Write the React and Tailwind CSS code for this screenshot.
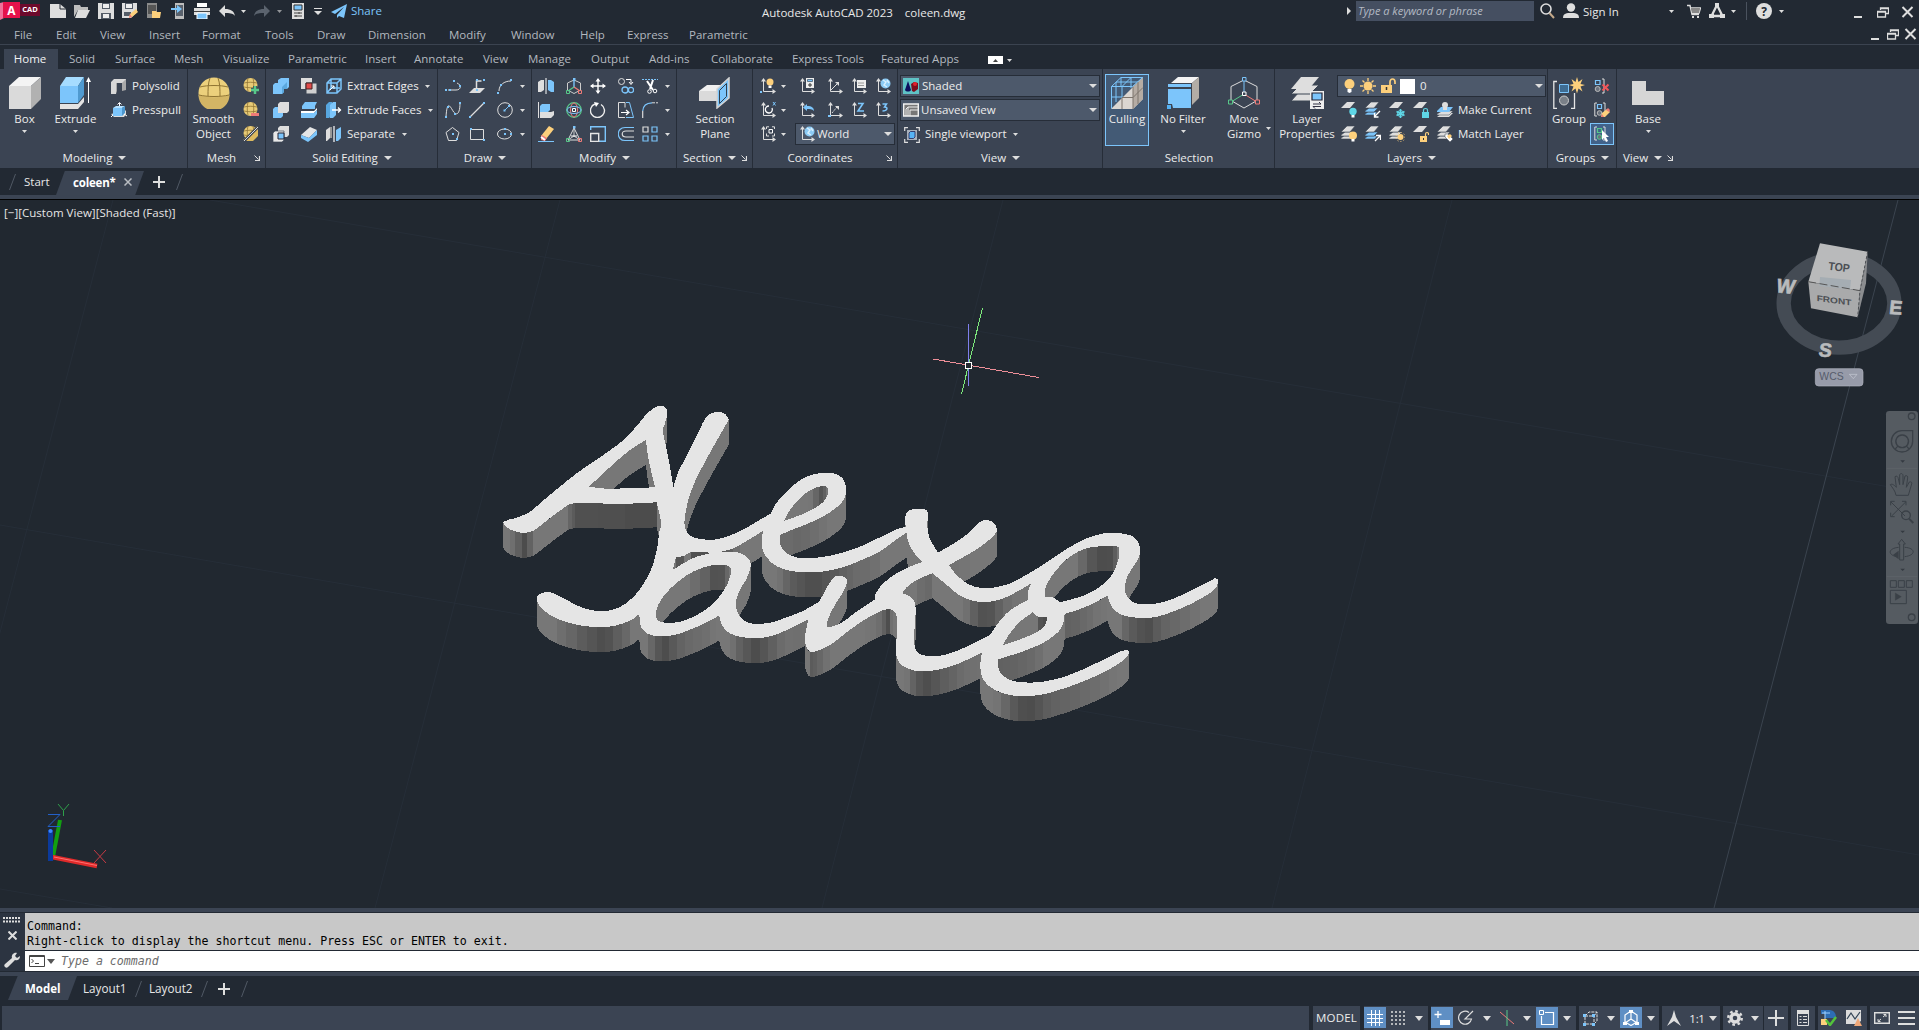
import React from "react";

const W = "#dedede", B = "#7cc5fb", Y = "#fdd07c", G = "#58c98a", R = "#ee7b78", T = "#5fd6e6";

/* ---------- primitives ---------- */
const Ic = ({ w = 16, h = 16, c = "", children }) => (
  <svg width={w} height={h} viewBox={`0 0 ${w} ${h}`} className={`shrink-0 ${c}`} fill="none">{children}</svg>
);
const Caret = ({ c = "" }) => <Ic w={5} h={3} c={c}><path d="M0 0h5L2.500 3z" fill={W} /></Ic>;
const BigCaret = ({ c = "" }) => <Ic w={8} h={4} c={c}><path d="M0 0h8L4 4z" fill={W} /></Ic>;
const L = ({ c = "", children }) => <span className={`whitespace-nowrap pb-[2px] ${c}`}>{children}</span>;

/* ---------- title bar icons ---------- */
const Logo = () => (
  <div className="flex h-[18px] w-[40px] shrink-0 items-center">
    <Ic w={20} h={18}>
      <path d="M0 1l4-1v16l-4 2z" fill="#f0719a" />
      <path d="M3 0h17v16H3z" fill="#e5124b" />
      <text x="11.500" y="12.500" textAnchor="middle" fontSize="12" fontWeight="700" fill="#fff" fontFamily="Open Sans, sans-serif">A</text>
    </Ic>
    <div className="mb-[2px] flex h-[12px] w-[20px] items-center justify-center bg-[#6d0a2c] text-[7.500px] font-bold leading-none text-white">CAD</div>
  </div>
);
const NewI = () => <Ic><path d="M0 1h10l6 5v9H0z" fill={W} /><path d="M10 1v5h6" stroke="#222933" /></Ic>;
const OpenI = () => <Ic><path d="M0 14V2h6l1 2h7v3H4z" fill="#bdbdbd" /><path d="M4 7h12l-4 8H1z" fill={W} /></Ic>;
const SaveI = () => <Ic><path d="M0 0h16v16H0z" fill={W} /><path d="M4 0h8v6H4zM3 10h10v6H3z" fill="#555d68" /><path d="M5 1h6v4H5zM5 11h6v4H5z" fill="#eee" /></Ic>;
const SaveAsI = () => <Ic><path d="M0 0h15v9l-6 6H0z" fill={W} /><path d="M3 0h8v6H3zM2 9h7v4H2z" fill="#555d68" /><path d="M4 1h6v4H4z" fill="#eee" /><path d="M7 15l1-4 6-5 2 3-6 5z" fill={Y} /><path d="M7 15l1-4 2 3z" fill={R} /></Ic>;
const WebOpenI = () => <Ic><path d="M1 0h10v15H1z" fill="#8b8b8b" /><path d="M2 2h8v9H2z" fill="#555" /><path d="M6 15V8h4l1 1h4l-1 6z" fill={Y} /></Ic>;
const WebSaveI = () => <Ic><path d="M5 0h9v16H5z" fill="#bdbdbd" /><path d="M6 2h7v11H6z" fill="#5a626d" /><path d="M1 5h6V2l5 4-5 4V7H1z" fill={B} /></Ic>;
const PrintI = () => <Ic><path d="M3 0h10v4H3z" fill="#fff" /><path d="M0 5h16v7H0z" fill={W} /><path d="M0 8h16v1H0z" fill="#444" /><path d="M3 10h10v6H3z" fill={B} stroke="#fff" /></Ic>;
const UndoI = ({ col = W, flip }) => <Ic><g transform={flip ? "translate(16 0) scale(-1 1)" : ""}><path d="M6 2v4c6 0 9 2 10 7-2-3-6-3-10-3v4L0 8z" fill={col} /></g></Ic>;
const SheetI = () => <Ic w={12} h={16}><path d="M0 0h12v16H0z" fill={W} /><path d="M2 2h8v5H2z" fill={B} stroke="#333" /><path d="M2 10h8M2 13h8" stroke="#444" /><path d="M7 9v2M4 12v2" stroke="#444" /></Ic>;
const PlaneI = () => <Ic><path d="M16 1L0 9l4 2L13 4 6 12v3l2-2 5 2z" fill={B} /></Ic>;
const RestoreI = () => <Ic w={12} h={11}><path d="M3.500 3V1h8v5.500H9M3 1.500h9M.500 4.500h8V10h-8zM0 5h9" stroke={W} strokeWidth="1.300" /></Ic>;
const CloseI = () => <Ic w={13} h={12}><path d="M1.500 1l10 10M11.500 1l-10 10" stroke={W} strokeWidth="2" /></Ic>;

/* ---------- large ribbon icons ---------- */
const BoxI = () => <Ic w={32} h={32}><path d="M0 9L10 0h22L22 9z" fill="#f4f4f4" /><path d="M0 9h22v23H0z" fill="#dadada" /><path d="M22 9L32 0v22L22 32z" fill="#b1b1b1" /></Ic>;
const ExtrudeI = () => <Ic w={32} h={32}><path d="M0 27h18l6-7v5l-6 7H0z" fill="#e3e3e3" /><path d="M0 9L6 0h18l-6 9z" fill="#a6dcff" /><path d="M0 9h18v17H0z" fill={B} /><path d="M18 9l6-9v18l-6 8z" fill="#4f9ad0" /><path d="M28.500 4v22" stroke="#fff" /><path d="M26 5l2.500-5L31 5z" fill="#fff" /></Ic>;
const SmoothI = () => <Ic w={32} h={32}><circle cx="16" cy="16" r="15.500" fill="#ecd07c" /><path d="M.5 18c8 3 23 3 31 0A15 15 0 0 1 .5 18" fill="#d3b565" /><path d="M2 10c7-2 21-2 28 0M1 18c8 2 22 2 30 0M12 1c-2 5-2 12-2 18M20 1c2 5 2 12 2 18" stroke="#8f7433" /></Ic>;
const SectionI = () => <Ic w={32} h={32}><path d="M0 14L8 8h14l-3 6z" fill="#f0f0f0" /><path d="M0 14h18v10H0z" fill="#dadada" /><path d="M18 12L30 1v20L18 31z" fill={B} stroke="#d5d5d5" strokeWidth="1.500" /><path d="M20.500 13.500l7-7v13l-7 7z" stroke="#32404e" /></Ic>;
const CullI = () => <Ic w={32} h={32}><path d="M0 32L22 10 32 0v22L22 32z" fill="#dbd6d1" /><path d="M22 10L32 0v22L22 32z" fill="#b5aca4" /><path d="M.5 31.500V9.500L10 .5h21.500M.5 9.500h21l10-9M.5 20h11M11 9.500v11M11 9.500l9-9M10 .5v9M20 .5V11M5 5h22M5 5v20" stroke={B} /><path d="M11 21v11M11 20.500h11l10-10M22 10v22M27 5v22" stroke="#7d746c" /></Ic>;
const FilterI = () => <Ic w={32} h={32}><path d="M4 6l7-6h21l-7 6z" fill="#f4f4f4" /><path d="M25 6l7-6v21l-7 7z" fill="#b3ada6" /><path d="M1 7h23v3H1zM1 12h23v19H6l-1-4H1z" fill={B} /><path d="M0 28h4v4H0z" fill="#55b1f3" /></Ic>;
const GizmoI = () => <Ic w={32} h={32}><path d="M16 3L3 9.500v14L16 31l13-7.500v-14z" stroke="#ddd" /><path d="M16 4v13" stroke={B} /><path d="M16 17L3 25" stroke={G} /><path d="M16 17l13 8" stroke={R} /><path d="M14.500.5h3.500v3.500h-3.500z" stroke={B} fill="#3b4453" /><path d="M.5 23h4v4h-4z" stroke={G} fill="#3b4453" /><path d="M27.500 23h4v4h-4z" stroke={R} fill="#3b4453" /><path d="M14.500 15h3.500v3.500h-3.500z" stroke="#fff" fill="#3b4453" /></Ic>;
const LayerBigI = () => <Ic w={33} h={32}><path d="M0 24l8-9h19l-8 9z" fill={W} /><path d="M0 24l8-9h19l-8 9z" stroke="#3b4453" /><path d="M0 17l9-9h19l-9 9z" fill={W} stroke="#3b4453" /><path d="M0 12L10 0h18L18 12z" fill={W} /><path d="M19 14h14v18H19z" fill="#eee" /><path d="M21 16h10v7H21z" fill={B} stroke="#223" strokeWidth="1.200" /><path d="M22 27h8l-2-2M30 29.500h-8l2 2" stroke="#334" /></Ic>;
const GroupBigI = () => <Ic w={32} h={32}><path d="M4 4.500H.8v27H4M18 31.500h3.500V16" stroke="#e6e6e6" strokeWidth="1.300" /><path d="M6.500 7.500h9v8h-9z" stroke={B} fill="#3f6d93" /><circle cx="11" cy="23.500" r="4.500" fill="#7a8088" stroke="#ccc" /><path d="M24 0l1.500 5 4-3-2 5 4.500 1-4.500 1.500 2 5-4-3-1.500 5-1.500-5-4 3 2-5L16 8l4.500-1-2-5 4 3z" fill={Y} /></Ic>;
const BaseI = () => <Ic w={32} h={24}><path d="M0 0h14v10h18v14H0z" fill="#d6d6d6" /></Ic>;

/* ---------- small ribbon icons ---------- */
const PolysolidI = () => <Ic><path d="M0 4l3-3h12v11H11V5H5v11H0z" fill="#d8d8d8" /><path d="M5 5h1v8l-1 3zM11 5l4-4v11l-4 1z" fill="#a9a9a9" /></Ic>;
const PresspullI = () => <Ic><path d="M0 12l4-1h8l3-3v4l-2 3H3z" fill={W} /><path d="M2 6l3-2h9l-3 2z" fill="#b5e1ff" /><path d="M2 6h9v8H2z" fill={B} /><path d="M11 6l3-2v7l-3 3z" fill="#4d98cf" /><path d="M8.500 4V1M6.500 2.500l2-2 2 2M0 15l2-2M16 14l-3-2" stroke="#fff" /></Ic>;
const Ball = ({ children }) => <Ic><circle cx="7.500" cy="7" r="7" fill="#e8cb76" /><path d="M1 5c4-1 9-1 13 0M1 9c4 1 9 1 13 0M5 0c-1 4-1 10 0 13M10 0c1 4 1 10 0 13" stroke="#8f7433" strokeWidth=".8" />{children}</Ic>;
const BallPlus = () => <Ball><path d="M12 8v8M8 12h8" stroke="#3b4453" strokeWidth="4" /><path d="M12 8v8M8 12h8" stroke={G} strokeWidth="2.500" /></Ball>;
const BallMinus = () => <Ball><path d="M8 12.500h8" stroke={R} strokeWidth="3" /></Ball>;
const BallHalf = () => <Ball><path d="M0 14L14 0l1 3v7l-5 5H4z" fill="#dcb95f" /><path d="M1 15L15 1" stroke="#3b4453" strokeWidth="3" /><path d="M1 15L15 1" stroke="#ddd" /></Ball>;
const UnionI = () => <Ic><path d="M0 7l2-2h3V2l3-2h8v9l-2 2h-3v3l-2 2H0z" fill={B} /><path d="M11 11v3l-2 2V9l5-5v7z" fill="#5ba8de" /></Ic>;
const SubtractI = () => <Ic><path d="M5 2l2-2h9v9l-2 2H5z" fill={W} /><path d="M0 7l2-2h3v6h5v3l-2 2H0z" fill={B} /></Ic>;
const IntersectI = () => <Ic><path d="M5 2l2-2h9v9l-2 2H5z" fill={W} /><path d="M0 7l2-2h9v9l-2 2H0z" fill="#e8e8e8" stroke="#444d5b" strokeWidth=".7" /><path d="M5 7h6v6H5z" fill={B} stroke="#223" /></Ic>;
const InterfereI = () => <Ic><path d="M0 0h11v11H0z" fill="#ddd" /><path d="M5 5h11v11H5z" fill="#d0d0d0" stroke="#3b4453" /><path d="M5 5h6v6H5z" fill="#e04b4b" stroke="#422" /></Ic>;
const SliceI = () => <Ic><path d="M1 4l3-4h12l-2 4v3H1z" fill={B} /><path d="M0 9h13l3-3v2l-3 3H0z" fill="#fff" /><path d="M0 11h13l3-3v4l-3 4H0z" fill={B} /></Ic>;
const ThickenI = () => <Ic><path d="M0 9l9-8 7 3-8 8z" fill="#e5e5e5" /><path d="M0 9l8 3 8-8v5l-9 7-7-4z" fill={B} /></Ic>;
const ExtractI = () => <Ic><path d="M1 5l4-4h10v10l-4 4H1zM1 5h10v10M11 5l4-4M5 1v9h9M1 15l4-5" stroke={B} strokeWidth="1.500" /><path d="M4 12l4-4M5 8h3v3" stroke="#fff" /></Ic>;
const ExtFaceI = () => <Ic><path d="M0 3l3-3h3v13l-3 3H0z" fill="#57a6df" /><path d="M4 3l3-3h3v13l-3 3H4z" fill={B} /><path d="M6 8h9M12 5.500L14.500 8 12 10.500" stroke="#fff" strokeWidth="1.300" /></Ic>;
const SeparateI = () => <Ic><path d="M0 4l4-3v11l-3 3H0z" fill={W} /><path d="M4 1h2v11l-2 0z" fill="#999" /><path d="M8 0v16" stroke="#fff" strokeWidth="1.200" /><path d="M10 4l5-3v11l-3 3h-2z" fill={B} /></Ic>;
const Dot = ({ p }) => p.map(([x, y], i) => <rect key={i} x={x - 1} y={y - 1} width="2" height="2" fill={B} />);
const PolyI = () => <Ic><path d="M3 12h8c5 0 6-5 1-7" stroke={W} /><Dot p={[[1, 12], [5, 12], [9, 3], [15, 8]]} /></Ic>;
const HelixI = () => <Ic><path d="M0 15l5-5h11l-5 5z" fill={W} /><path d="M7.500 12V3h5" stroke={W} strokeWidth="1.500" /><Dot p={[[8, 2], [15, 2], [8, 12]]} /></Ic>;
const ArcI = () => <Ic><path d="M2 13C2 7 7 3 14 3" stroke={W} /><Dot p={[[1, 15], [4, 7], [14, 2]]} /></Ic>;
const SplineI = () => <Ic><path d="M1 15C2-2 5 4 8 9s7 4 7-8" stroke={W} /><Dot p={[[1, 15], [3, 5], [10, 12], [15, 1]]} /></Ic>;
const LineI = () => <Ic><path d="M1 15L15 1" stroke={W} strokeWidth="1.300" /><Dot p={[[1, 15], [15, 1]]} /></Ic>;
const CircleI = () => <Ic><circle cx="8" cy="8" r="7.300" stroke={W} /><path d="M8 8l4-4" stroke={B} /><Dot p={[[7.500, 8.500], [12, 4]]} /></Ic>;
const PolygonI = () => <Ic><path d="M7.500 1.500l6.500 5-2.500 8h-8L1 6.500z" stroke={W} /><Dot p={[[8, 8], [12, 13]]} /></Ic>;
const RectI = () => <Ic><path d="M1.500 3.500h13v10h-13z" stroke={W} /><Dot p={[[2, 3], [15, 14]]} /></Ic>;
const EllipseI = () => <Ic><ellipse cx="7.500" cy="8" rx="7" ry="5" stroke={W} /><Dot p={[[8, 8], [14, 8], [8, 3]]} /></Ic>;
const MirrorI = () => <Ic><path d="M0 4l3-2h3v10l-3 2H0z" fill={W} /><path d="M8 0v16" stroke="#fff" /><path d="M10 2h3l3 2v10h-3l-3-2z" fill={B} /></Ic>;
const AlignI = () => <Ic><path d="M.5 0v16" stroke={W} /><path d="M2 4l2-2h8v6l-2 2H2z" fill={B} /><path d="M2 10h11l3-1v4l-3 3H2z" fill={W} /></Ic>;
const EraseI = () => <Ic><path d="M3 10l8-10 5 3-8 10z" fill={Y} /><path d="M3 10l1-1 5 3-2 3-4-1z" fill={R} /><path d="M0 15.500h16" stroke={B} /><path d="M3 11l4 3" stroke="#fff" strokeWidth="2" /></Ic>;
const Giz = ({ k }) => <Ic>{k === 0 && <><path d="M8 2L1.500 5v7L8 15.500 14.500 12V5z" stroke="#ccc" /><path d="M8 2v7" stroke={B} strokeWidth="1.400" /><path d="M8 9l-6 4" stroke={G} strokeWidth="1.400" /><path d="M8 9l6 4" stroke={R} strokeWidth="1.400" /></>}{k === 1 && <><circle cx="8" cy="8" r="7.300" stroke={G} strokeWidth="1.200" /><ellipse cx="8" cy="8" rx="3.500" ry="7" stroke={R} /><ellipse cx="8" cy="8" rx="7" ry="3.500" stroke={B} /><path d="M6.500 6.500h3v3h-3z" stroke="#fff" /></>}{k === 2 && <><path d="M8 2l6 12H2z" stroke="#ddd" /><path d="M8 2v8M8 10L2 14M8 10l6 4" stroke="#ccc" /><path d="M5 10h6" stroke="#fff" /></>}{k !== 1 && <><path d="M7 0h2.500v2.500H7z" fill={B} /><path d="M.5 12.500h3v3h-3z" stroke={G} /><path d="M12.500 12.500h3v3h-3z" stroke={R} /></>}</Ic>;
const MoveI = () => <Ic><path d="M8 1v14M1 8h14" stroke="#fff" strokeWidth="1.400" /><path d="M8 0l2.500 3.500h-5zM8 16l2.500-3.500h-5zM0 8l3.500-2.500v5zM16 8l-3.500-2.500v5z" fill="#fff" /></Ic>;
const RotateI = () => <Ic><path d="M11 2.500A7 7 0 1 1 5 2" stroke="#eee" strokeWidth="1.400" /><path d="M4 0l5 1-3 4z" fill="#fff" /></Ic>;
const ScaleI = () => <Ic><path d="M4 .7h11.300v14.600H9M.7 4V.7H4" stroke={B} strokeWidth="1.400" /><path d="M.7 7.500h8v8h-8z" stroke="#e5e5e5" strokeWidth="1.400" /></Ic>;
const CopyI = () => <Ic><circle cx="3.500" cy="3.500" r="3" stroke={W} /><circle cx="7" cy="12" r="3" stroke={B} strokeWidth="1.300" /><circle cx="13" cy="12" r="2.600" stroke={B} strokeWidth="1.300" /><path d="M8 1.500h5v4M11 4l2 2.500L15 4" stroke="#fff" /></Ic>;
const StretchI = () => <Ic><path d="M7 .5H.5v15H7M7 .5v5" stroke="#ddd" /><path d="M8 .5h3.500l4 15H8" stroke={B} /><path d="M3 10.500h7M8 8l3 2.500L8 13" stroke="#fff" strokeWidth="1.200" /></Ic>;
const OffsetI = () => <Ic><path d="M16 1.500H7c-9 0-9 13 0 13h9" stroke={B} strokeWidth="1.200" /><path d="M16 5H8c-5 0-5 6 0 6h8" stroke="#ddd" strokeWidth="1.200" /></Ic>;
const TrimI = () => <Ic><path d="M0 1.500h16" stroke={B} strokeDasharray="2 1" /><path d="M5 3l6 9M11 2L8 11" stroke="#fff" strokeWidth="2" /><circle cx="7.500" cy="13.500" r="1.800" stroke="#fff" /><circle cx="13" cy="13" r="1.800" stroke="#fff" /></Ic>;
const FilletI = () => <Ic><path d="M.7 16V9" stroke="#ddd" strokeWidth="1.200" /><path d="M.7 9C1 4 4 1 10 .8" stroke={B} strokeWidth="1.200" /><path d="M10 .8h6" stroke="#ddd" strokeDasharray="3 1" /></Ic>;
const ArrayI = () => <Ic><path d="M1 1h5v5H1z" stroke="#ddd" strokeWidth="1.200" /><path d="M10 1h5v5h-5zM1 10h5v5H1zM10 10h5v5h-5z" stroke={B} strokeWidth="1.200" /></Ic>;
const Ucs = ({ children }) => <Ic><path d="M3.500 1v12.500H15" stroke={W} /><path d="M3.500 0L6 3.500H1zM16 13.500L12.500 11v5z" fill={W} />{children}</Ic>;
const UGlobe = () => <Ucs><circle cx="10.500" cy="5.500" r="5" fill="#8ccbf5" /><path d="M8 2l3 2-2 3 3 2M12 2l2 3" stroke="#d6efff" strokeWidth="1.500" /></Ucs>;
const U = {
  bulb: <Ucs><circle cx="10" cy="4" r="3.500" fill={Y} /><path d="M8.500 7.500h3V10h-3z" fill="#fff" /><path d="M0 13h2v2H0z" fill={B} /></Ucs>,
  calc: <Ucs><path d="M7 0h8v10H7z" fill="#eee" /><path d="M8.500 1.500h5v2h-5z" fill={B} stroke="#234" strokeWidth=".6" /><path d="M9 7h4M11 5v4" stroke="#333" /></Ucs>,
  vec: <Ucs><path d="M4 12l7-7" stroke={W} /><path d="M12 4v4L8 4z" fill={W} /></Ucs>,
  named: <Ucs><path d="M6 2h9v8H6z" fill="#eee" /><path d="M7.500 5h6M7.500 7.500h6" stroke="#444" strokeDasharray="1 1" /></Ucs>,
  globe: <UGlobe />,
  rotx: <Ucs><path d="M12 6a3.500 3.500 0 1 1-3-2" stroke="#fff" strokeWidth="1.300" /><path d="M13 0l2.500 3.500M15.500 0L13 3.500" stroke={B} /></Ucs>,
  prev: <Ucs><path d="M8 2v2c5 0 7 2 7 5-2-2-4-2-7-2v2L4 5.500z" fill={B} /></Ucs>,
  face: <Ucs><path d="M5 11l5-6" stroke={W} strokeDasharray="2 1" /><path d="M12 4v4L8 4z" fill={W} /><path d="M1 13h3v2H1z" fill={B} /></Ucs>,
  z: <Ucs><path d="M7 1.500h5L7 9h6" stroke={B} strokeWidth="1.600" /></Ucs>,
  three: <Ucs><path d="M7.500 2h4L9.500 5c4 0 3 4-2 4" stroke={B} strokeWidth="1.500" /></Ucs>,
  view: <Ucs><path d="M6.500 3V.8H9M12 .8h2.500V3M14.500 7.500V10H12M9 10H6.500V7.500" stroke={W} /><path d="M9 3.500h3.500v3.500H9z" stroke="#fff" /></Ucs>,
};
const ShadedI = () => <Ic><path d="M0 0h16v16H0z" fill="#5fc3c6" /><path d="M2 12l3-9 3 9c-1 2-5 2-6 0" fill="#0d0f5e" /><path d="M8 6l3-2 4 1v6l-4 3-2-1z" fill="#7d0d1c" /><circle cx="12" cy="6" r="2" fill="#e0202c" /></Ic>;
const UnsavedI = () => <Ic><path d="M.7 2h14.600v12H.7z" fill="#777" stroke="#f2f2f2" strokeWidth="1.400" /><path d="M3 14V7l2-2h10M7 14V8h8M5 5v9" stroke="#eee" /></Ic>;
const ViewportI = () => <Ic><path d="M.7 4V.7H4M12 .7h3.300V4M15.300 12v3.300H12M4 15.300H.7V12" stroke={W} strokeWidth="1.200" /><path d="M3 3h10v10H3z" fill="#a9b1bb" /><path d="M5 6l1.500-1.500h4.500V10l-1.500 1.500H5z" fill="#57b4f5" stroke="#225" strokeWidth=".8" /></Ic>;
const Bulb = () => <Ic w={11} h={16}><circle cx="5.500" cy="6" r="5" fill={Y} /><path d="M3.500 11h4v3l-2 1-2-1z" fill="#fff" /></Ic>;
const Sun = () => <Ic><circle cx="8" cy="8" r="4.500" fill={Y} /><path d="M8 0v3M8 13v3M0 8h3M13 8h3M2.500 2.500l2 2M11.500 11.500l2 2M13.500 2.500l-2 2M2.500 13.500l2-2" stroke={Y} strokeWidth="1.300" /></Ic>;
const LockOpen = () => <Ic w={15} h={16}><path d="M0 7h11v8H0z" fill={Y} /><path d="M9 7V4c0-4 5-4 5 0v2" stroke={Y} strokeWidth="1.700" /><path d="M5.500 9v3" stroke="#333" strokeWidth="1.500" /></Ic>;
const One = () => <path d="M0 6l6-6h8L9 6z" fill={W} />;
const Stack = ({ b }) => <><path d="M0 12l3-2h9l-2 3H0z" fill={b ? B : W} stroke="#3b4453" strokeWidth=".6" /><path d="M0 9l4-3h9l-4 4H0z" fill={b ? B : W} stroke="#3b4453" strokeWidth=".6" /><path d="M0 6l6-6h8L9 6z" fill={W} stroke="#3b4453" strokeWidth=".6" /></>;
const LyOff = () => <Ic><One /><circle cx="12" cy="9.500" r="3.700" fill={T} /><path d="M10.500 13h3v2.500h-3z" fill="#fff" /></Ic>;
const LyIso = () => <Ic><Stack b /><path d="M15 9l-5 5M9.500 11v4h4" stroke="#fff" strokeWidth="1.300" /></Ic>;
const LyFrz = () => <Ic><One /><path d="M11.500 7v9M7.500 9.500l8 4M15.500 9.500l-8 4" stroke={T} strokeWidth="1.600" /><circle cx="11.500" cy="11.500" r="3" stroke={T} /></Ic>;
const LyLock = () => <Ic><One /><path d="M9 10h7v6H9z" fill={T} /><path d="M10.500 10V8c0-2 4-2 4 0v2" stroke={T} strokeWidth="1.200" /></Ic>;
const LyCur = () => <Ic><path d="M0 15l5-4h11l-4 4z" fill={W} /><path d="M0 12l5-3h11l-4 4H0z" fill={W} stroke="#3b4453" strokeWidth=".5" /><path d="M0 9l4-4h12l-4 5H0z" fill={B} /><circle cx="8" cy="3" r="3" fill={W} /><path d="M6 5h4v3H6z" fill={W} /></Ic>;
const LyOn = () => <Ic><Stack /><circle cx="12" cy="9.500" r="4" fill={Y} /><path d="M10.500 13h3v2.500h-3z" fill="#fff" /></Ic>;
const LyUniso = () => <Ic><Stack b /><path d="M10 15l5-5M11 9.500h4.500V14" stroke="#fff" strokeWidth="1.300" /></Ic>;
const LyThaw = () => <Ic><Stack /><circle cx="11.500" cy="11" r="3" fill={Y} /><circle cx="11.500" cy="11" r="4.500" stroke={Y} strokeDasharray="1 2" /></Ic>;
const LyUnlock = () => <Ic><One /><path d="M7 10h7v6H7z" fill={Y} /><path d="M12.500 10V8c0-2 3-2 3 0v1" stroke={Y} strokeWidth="1.200" /><path d="M10.500 12v2" stroke="#333" /></Ic>;
const LyMatch = () => <Ic><Stack /><path d="M8 8l3 0 5 5-3 3-5-5z" fill="#fff" stroke="#3b4453" strokeWidth=".5" /><path d="M10 10l3-2 2 2-3 3z" fill={Y} /></Ic>;
const Grp = ({ g, children }) => <Ic><path d="M3 1H.8v13H3M9 1h2v13H9" stroke="#ddd" /><path d="M3.500 2.500h4v4h-4z" stroke={g ? G : B} strokeWidth="1.200" /><circle cx="5.500" cy="11" r="2.300" stroke={g ? G : "#bbb"} fill="#6a727d" />{children}</Ic>;
const GrpX = () => <Ic><path d="M8 1h2v14H8" stroke="#ddd" /><path d="M1.500 2.500h4.500v4H1.500z" stroke={B} strokeWidth="1.200" /><circle cx="3.700" cy="11" r="2.500" stroke="#bbb" fill="#6a727d" /><path d="M8.500 6.500l6 6M14.500 6.500l-6 6" stroke="#f0565a" strokeWidth="2" /></Ic>;
const GrpE = () => <Grp><path d="M7 15l1-4 5-4 3 3-5 5z" fill={Y} /><path d="M7 15l1-3 2 3zM12 8l2-2 2 2-1 2z" fill={R} /></Grp>;
const GrpS = () => <Grp g><path d="M8 4l7 7h-3l2 4-2 1-2-4-2 2z" fill="#fff" /></Grp>;

/* ---------- ribbon building blocks ---------- */
const Launch = () => <Ic w={6} h={6}><path d="M.5 .5l4 4" stroke={W} /><path d="M5.500 1v4.500H1" stroke={W} strokeWidth="1.200" /></Ic>;
const Panel = ({ w, title, caret, launcher, last, children }) => (
  <section className={`flex h-full shrink-0 flex-col ${w} ${last ? "" : "border-r border-[#262d38]"}`}>
    <div className="flex h-[79px] pt-[5px]">{children}</div>
    <div className="flex h-[20px] items-center">
      <div className="flex flex-1 items-center justify-center gap-[6px] whitespace-nowrap pb-px pl-px">{title}{caret && <BigCaret />}</div>
      {launcher && <div className="w-[11px]"><Launch /></div>}
    </div>
  </section>
);
const Big = ({ w, icon, lines, caret, c = "" }) => (
  <div className={`flex shrink-0 flex-col items-center pt-[3px] ${w} ${c}`}>
    <div className="flex h-[32px] items-center">{icon}</div>
    <div className="mt-[2px] text-center leading-[15px]">{lines.map((l) => <div key={l} className="whitespace-nowrap">{l}</div>)}</div>
    {caret && <Caret c="mt-[4px]" />}
  </div>
);
const Combo = ({ c = "", children }) => (
  <div className={`flex h-[22px] items-center border border-[#262d38] bg-[#4d596b] ${c}`}>{children}<BigCaret c="ml-auto mr-[2px]" /></div>
);

const menus = [["File", "w-[42px]"], ["Edit", "w-[44px]"], ["View", "w-[49px]"], ["Insert", "w-[53px]"], ["Format", "w-[63px]"], ["Tools", "w-[52px]"], ["Draw", "w-[51px]"], ["Dimension", "w-[81px]"], ["Modify", "w-[62px]"], ["Window", "w-[69px]"], ["Help", "w-[47px]"], ["Express", "w-[62px]"], ["Parametric", "w-[80px]"]];
const tabs = [["Solid", "w-[46px]"], ["Surface", "w-[59px]"], ["Mesh", "w-[49px]"], ["Visualize", "w-[65px]"], ["Parametric", "w-[77px]"], ["Insert", "w-[49px]"], ["Annotate", "w-[69px]"], ["View", "w-[45px]"], ["Manage", "w-[63px]"], ["Output", "w-[58px]"], ["Add-ins", "w-[62px]"], ["Collaborate", "w-[81px]"], ["Express Tools", "w-[89px] tracking-[-0.1px]"], ["Featured Apps", "w-[107px]"]];

const TitleBar = () => (
  <header className="flex h-[22px] items-center">
    <Logo />
    <div className="ml-[10px] flex items-center gap-[8px]"><NewI /><OpenI /><SaveI /><SaveAsI /><WebOpenI /><WebSaveI /><PrintI /></div>
    <div className="ml-[9px] flex items-center"><UndoI /><Caret c="ml-[6px]" /><span className="ml-[8px] flex"><UndoI col="#5b636e" flip /></span><Caret c="ml-[7px] opacity-60" /></div>
    <div className="ml-[10px] flex items-center"><SheetI /><Ic w={8} h={7} c="ml-[10px]"><path d="M0 0h8v1H0zM0 3h8L4 7z" fill={W} /></Ic></div>
    <div className="ml-[9px] flex w-[431px] items-center gap-[4px] text-[11.500px] text-[#7cc5fb]"><PlaneI /><L>Share</L></div>
    <div className="flex w-[585px] items-center gap-[12px] pt-[2px] text-[#e8e8e8]"><span>Autodesk AutoCAD 2023</span><span>coleen.dwg</span></div>
    <Ic w={4} h={8}><path d="M0 0l4 4-4 4z" fill={W} /></Ic>
    <div className="ml-[5px] flex h-[20px] w-[178px] items-center bg-[#454f61] pb-px pl-[2px] text-[11px] italic text-[#b4bac4]">Type a keyword or phrase</div>
    <Ic w={15} h={16} c="ml-[6px]"><circle cx="6" cy="6" r="5" stroke={W} strokeWidth="1.600" /><path d="M9.500 10l4.500 5" stroke="#c4a98a" strokeWidth="2" /></Ic>
    <Ic w={16} h={16} c="ml-[8px]"><circle cx="8" cy="4.500" r="4.200" fill={W} /><path d="M0 15c0-5 4-5 8-5s8 0 8 5z" fill={W} /></Ic>
    <div className="ml-[4px] w-[86px] text-[#e8e8e8]">Sign In</div>
    <Caret />
    <Ic w={14} h={15} c="ml-[13px]"><path d="M0 1.500h3l2 9h7M4 4h9.500l-1.500 5H5" stroke={W} strokeWidth="1.400" /><path d="M4 4h9l-1 5H5z" fill="#888" /><path d="M5 12h2v2H5zM10 12h2v2h-2z" fill={W} /></Ic>
    <Ic w={16} h={16} c="ml-[8px]"><path d="M8 2L2.500 13h11z" stroke={W} strokeWidth="2.300" /><path d="M6 0h4v4H6zM0 11h5v4H0zM11 11h5v4h-5z" fill={W} /></Ic>
    <Caret c="ml-[6px]" />
    <div className="ml-[10px] h-[18px] w-px bg-[#4a525e]" />
    <div className="ml-[9px] flex size-[16px] items-center justify-center rounded-full bg-[#dedede] text-[12px] font-bold text-[#222933]">?</div>
    <Caret c="ml-[7px]" />
    <div className="ml-auto flex items-center pr-[5px] pt-[2px]"><div className="mt-[9px] h-[2px] w-[8px] bg-[#dedede]" /><span className="ml-[15px]"><RestoreI /></span><span className="ml-[12px]"><CloseI /></span></div>
  </header>
);

const MenuBar = () => (
  <nav className="flex h-[23px] items-center border-b border-[#3b4350] pl-[14px] pt-[2px] text-[#b3b8bf]">
    {menus.map(([m, w]) => <div key={m} className={`${w} shrink-0 whitespace-nowrap`}>{m}</div>)}
    <div className="ml-auto flex items-center pr-[2px]"><div className="mt-[9px] h-[2px] w-[8px] bg-[#dedede]" /><span className="ml-[8px]"><RestoreI /></span><span className="ml-[5px]"><CloseI /></span></div>
  </nav>
);

const TabBar = () => (
  <nav className="flex h-[24px] items-end text-[#b3b8bf]">
    <div className="ml-[4px] mr-[11px] flex h-[20px] w-[54px] items-center justify-center bg-[#3b4453] pb-[2px] pr-[2px] text-[#f2f2f2]">Home</div>
    {tabs.map(([t, w]) => <div key={t} className={`flex h-[20px] shrink-0 items-center whitespace-nowrap pb-[2px] ${w}`}>{t}</div>)}
    <div className="mb-[5px] flex h-[8px] w-[15px] items-center justify-center bg-white"><Ic w={5} h={3}><path d="M0 3h5L2.500 0z" fill="#444" /></Ic></div>
    <Caret c="mb-[7px] ml-[4px]" />
  </nav>
);

const Ribbon = () => (
  <div className="flex h-[99px] bg-[#3b4453] pl-px text-[#ececec]">
    <Panel w="w-[187px]" title="Modeling" caret>
      <Big w="w-[47px]" icon={<BoxI />} lines={["Box"]} caret />
      <Big w="w-[55px]" icon={<ExtrudeI />} lines={["Extrude"]} caret />
      <div className="ml-[8px] grid auto-rows-[24px] items-center">
        <div className="flex items-center gap-[5px]"><PolysolidI /><L>Polysolid</L></div>
        <div className="flex items-center gap-[5px]"><PresspullI /><L>Presspull</L></div>
      </div>
    </Panel>
    <Panel w="w-[78px]" title="Mesh" launcher>
      <Big w="w-[51px]" icon={<SmoothI />} lines={["Smooth", "Object"]} />
      <div className="ml-[4px] grid auto-rows-[24px] items-center"><BallPlus /><BallMinus /><BallHalf /></div>
    </Panel>
    <Panel w="w-[172px]" title="Solid Editing" caret>
      <div className="grid auto-rows-[24px] grid-cols-[28px_25px_21px_auto] items-center whitespace-nowrap pl-[7px]">
        <UnionI /><InterfereI /><ExtractI /><div className="flex items-center gap-[6px]"><L>Extract Edges</L><Caret /></div>
        <SubtractI /><SliceI /><ExtFaceI /><div className="flex items-center gap-[6px]"><L>Extrude Faces</L><Caret /></div>
        <IntersectI /><ThickenI /><SeparateI /><div className="flex items-center gap-[7px]"><L>Separate</L><Caret /></div>
      </div>
    </Panel>
    <Panel w="w-[94px]" title="Draw" caret>
      <div className="grid auto-rows-[24px] grid-cols-[24px_28px_23px_5px] items-center pl-[7px]">
        <PolyI /><HelixI /><ArcI /><Caret /><SplineI /><LineI /><CircleI /><Caret /><PolygonI /><RectI /><EllipseI /><Caret />
      </div>
    </Panel>
    <Panel w="w-[145px]" title="Modify" caret>
      <div className="grid auto-rows-[24px] grid-cols-[28px_24px_28px_24px_23px_5px] items-center pl-[6px]">
        <MirrorI /><Giz k={0} /><MoveI /><CopyI /><TrimI /><Caret />
        <AlignI /><Giz k={1} /><RotateI /><StretchI /><FilletI /><Caret />
        <EraseI /><Giz k={2} /><ScaleI /><OffsetI /><ArrayI /><Caret />
      </div>
    </Panel>
    <Panel w="w-[76px]" title="Section" caret launcher>
      <Big w="w-[76px]" icon={<SectionI />} lines={["Section", "Plane"]} />
    </Panel>
    <Panel w="w-[145px]" title="Coordinates" launcher>
      <div className="grid auto-rows-[24px] grid-cols-[21px_18px_28px_24px_24px_20px] items-center pl-[7px]">
        {U.bulb}<Caret />{U.calc}{U.vec}{U.named}{U.globe}
        {U.rotx}<Caret />{U.prev}{U.face}{U.z}{U.three}
        {U.view}<Caret />
        <div className="col-span-4 -ml-[4px]"><Combo c="w-[100px] gap-[2px] pl-[3px]">{U.globe}<L>World</L></Combo></div>
      </div>
    </Panel>
    <Panel w="w-[205px]" title="View" caret>
      <div className="grid auto-rows-[24px] items-center pl-[2px]">
        <Combo c="w-[200px] gap-[3px] pl-[2px]"><ShadedI /><L>Shaded</L></Combo>
        <Combo c="w-[200px] gap-[2px] pl-[2px]"><UnsavedI /><L>Unsaved View</L></Combo>
        <div className="flex items-center gap-[5px] pl-[4px] pt-[1px]"><ViewportI /><L>Single viewport</L><Caret c="ml-px" /></div>
      </div>
    </Panel>
    <Panel w="w-[172px]" title="Selection">
      <Big w="w-[44px]" c="ml-[2px] h-[72px] border border-[#7cc5fb] bg-[#435a75] !pt-[2px]" icon={<CullI />} lines={["Culling"]} />
      <Big w="w-[60px]" c="ml-[4px]" icon={<FilterI />} lines={["No Filter"]} caret />
      <Big w="w-[50px]" c="ml-[6px]" icon={<GizmoI />} lines={["Move", "Gizmo"]} />
      <Caret c="-ml-[3px] mt-[53px]" />
    </Panel>
    <Panel w="w-[273px]" title="Layers" caret>
      <Big w="w-[62px]" c="pl-[2px]" icon={<LayerBigI />} lines={["Layer", "Properties"]} />
      <div className="grid auto-rows-[24px] items-center">
        <Combo c="w-[209px] pl-[6px]"><Bulb /><span className="ml-[5px] flex"><Sun /></span><span className="ml-[5px] flex"><LockOpen /></span><span className="ml-[4px] mr-[5px] size-[15px] bg-white" /><L>0</L></Combo>
        <div className="flex items-center gap-[8px] pl-[4px]"><LyOff /><LyIso /><LyFrz /><LyLock /><LyCur /><L c="-ml-[3px]">Make Current</L></div>
        <div className="flex items-center gap-[8px] pl-[4px]"><LyOn /><LyUniso /><LyThaw /><LyUnlock /><LyMatch /><L c="-ml-[3px]">Match Layer</L></div>
      </div>
    </Panel>
    <Panel w="w-[69px]" title="Groups" caret>
      <Big w="w-[42px]" icon={<GroupBigI />} lines={["Group"]} />
      <div className="grid auto-rows-[24px] items-center justify-items-center">
        <GrpX /><GrpE /><div className="flex h-[22px] w-[24px] items-center justify-center border border-[#7cc5fb] bg-[#41628a]"><GrpS /></div>
      </div>
    </Panel>
    <Panel w="w-[61px]" title="View" caret launcher last>
      <Big w="w-[62px]" icon={<BaseI />} lines={["Base"]} caret />
    </Panel>
  </div>
);

const Slash = ({ c = "" }) => <Ic w={7} h={16} c={c}><path d="M.5 16L6.500 0" stroke="#505965" /></Ic>;
const Plus = ({ c = "" }) => <Ic w={12} h={12} c={c}><path d="M6 0v12M0 6h12" stroke={W} strokeWidth="2" /></Ic>;

const DocTabs = () => (
  <div className="flex h-[27px] items-center text-[#e8e8e8]">
    <Slash c="ml-[9px]" /><div className="ml-[8px] w-[32px]">Start</div>
    <div className="mt-[3px] flex h-[24px] w-[88px] items-center bg-[#3b4453] pb-[2px] pl-[17px] text-[11.500px] font-bold text-white [clip-path:polygon(10%_0,100%_0,90%_100%,0_100%)]">
      <span className="w-[51px] tracking-[-0.2px]">coleen*</span><Ic w={8} h={8}><path d="M.5 .5l7 7M7.500 .5l-7 7" stroke="#b8bcc2" strokeWidth="1.500" /></Ic>
    </div>
    <Plus c="ml-[9px]" /><Slash c="ml-[11px]" />
  </div>
);

/* ---------- extruded lettering ---------- */
/* Contour points are [x, y] with an optional third value of 1 for a sharp corner. */
const outer = [[70,425,1],[90,418],[110,413],[150,395],[200,353],[290,280],[380,218],[430,180],[470,138],[500,102],[525,82],[543,77],[558,85],[562,100],[555,130],[548,150],[556,190],[568,250],[580,323,1],[595,275],[620,228],[650,168],[672,122],[690,102],[716,96],[735,102],[744,116],[741,128],[700,200],[670,255],[645,305],[625,360],[615,410],[614,435],[622,458],[640,472],[670,478],[700,479],[740,470],[790,448],[830,425],[873,400,1],[885,375],[910,345],[950,308],[990,286],[1030,279],[1065,281],[1090,298],[1098,325],[1095,350],[1078,375],[1040,403],[990,428],[940,448],[900,465,1],[900,490],[910,510],[930,525],[960,534],[1000,534],[1050,527],[1100,514],[1140,500],[1200,472],[1250,448],[1277,441,1],[1276,420],[1278,403],[1290,390],[1315,387],[1338,390],[1344,405],[1342,435],[1346,465],[1357,490],[1374,518,1],[1430,485],[1470,455],[1495,430],[1515,420],[1538,426],[1551,447],[1545,462],[1515,490],[1470,520],[1407,555,1],[1430,585],[1465,612],[1500,623],[1540,623],[1590,610],[1640,584],[1700,547],[1760,507],[1820,475],[1880,459],[1930,461],[1965,474],[1980,505],[1975,535],[1950,575],[1937,605],[1937,640],[1955,663],[1985,673],[2030,670],[2080,656],[2140,628],[2185,606],[2205,594,1],[2213,598,1],[2210,620],[2185,642],[2130,673],[2070,698],[2020,712],[1970,713],[1925,704],[1897,683],[1882,647,1],[1840,670],[1800,687],[1754,702,1],[1748,735],[1730,760],[1690,788],[1640,810],[1590,827],[1554,838,1],[1554,860],[1565,882],[1590,900],[1630,907],[1680,906],[1740,894],[1800,872],[1860,844],[1920,815],[1943,810,1],[1947,815,1],[1940,832],[1910,855],[1860,882],[1800,908],[1740,929],[1690,943],[1640,948],[1590,945],[1540,927],[1510,898],[1501,860],[1506,817,1],[1470,835],[1430,853],[1380,868],[1330,874],[1290,868],[1260,850],[1248,820],[1250,770],[1252,730],[1247,700],[1230,688],[1205,692],[1170,710],[1140,728],[1100,757],[1050,795],[1010,813],[990,815],[978,798],[975,770],[985,718,1],[940,740],[890,763],[840,774],[790,772],[750,760],[728,738],[717,706,1],[690,722],[640,745],[590,763],[545,769],[505,762],[483,740],[478,702,1],[450,722],[400,738],[350,741],[290,734],[230,715],[190,690],[172,665],[175,645],[200,636],[225,642],[260,660],[300,680],[345,692],[390,691],[430,675],[470,640],[500,595],[520,550],[532,500],[538,455],[543,435],[540,410],[530,367,1],[435,371],[285,369,1],[265,375],[240,392],[200,422],[160,452],[125,458],[90,448],[72,432]];
const holes = [
  [[498,180,1],[505,235],[525,322,1],[430,325],[390,327],[325,320,1],[360,290],[400,252],[450,210]],
  [[588,532,1],[612,528,1],[632,516,1],[700,518,1],[650,530],[610,550],[578,570,1]],
  [[715,517,1],[760,505],[800,483],[850,452,1],[845,480],[850,515],[875,548],[910,567],[950,575],[1000,577],[1050,571],[1100,558],[1140,542],[1200,514],[1250,478],[1281,457,1],[1283,480],[1300,515],[1326,546,1],[1290,560],[1250,580],[1210,610],[1188,640],[1185,658,1],[1130,695],[1080,731],[1040,743,1],[1045,715],[1065,675],[1090,635],[1102,607,1],[1100,597],[1085,588],[1065,590],[1045,615],[1018,665,1],[970,692],[920,712],[870,728],[820,731],[790,720],[772,695],[768,665],[780,630],[800,595],[812,560],[808,540],[790,524],[760,515]],
  [[1357,580,1],[1310,600],[1280,622],[1267,640,1],[1290,650],[1306,675],[1305,730],[1302,770],[1306,805],[1320,822],[1355,829],[1400,823],[1460,800],[1530,765,1],[1550,735],[1580,700],[1610,678],[1645,660,1],[1643,640],[1653,610,1],[1620,630],[1570,655],[1520,666],[1470,660],[1430,640],[1395,610]],
  [[1696,650,1],[1698,620],[1725,575],[1770,530],[1820,505],[1880,498],[1912,500],[1918,512],[1915,540],[1895,585],[1860,620],[1810,647],[1740,667,1],[1718,652]],
  [[1568,796,1],[1590,760],[1620,725],[1658,697,1],[1675,710],[1702,710,1],[1695,735],[1670,757],[1620,778]],
  [[912,423,1],[930,390],[965,350],[1000,326],[1030,318],[1043,325],[1043,345],[1025,370],[980,397]],
  [[528,700],[540,665],[575,622],[630,580],[690,557],[735,555],[752,565],[750,590],[735,625],[700,670],[650,705],[600,725],[560,728],[535,722]],
];
const DEPTH = 75;
const STEPS = 6;
const smooth = (pts) => {
  const n = pts.length, out = [];
  for (let i = 0; i < n; i++) {
    const p0 = pts[(i + n - 1) % n], p1 = pts[i], p2 = pts[(i + 1) % n], p3 = pts[(i + 2) % n];
    const a = p1[2] ? p1 : p0, d = p2[2] ? p2 : p3;
    for (let s = 0; s < STEPS; s++) {
      const t = s / STEPS, t2 = t * t, t3 = t2 * t;
      out.push([0, 1].map((k) => 0.5 * (2 * p1[k] + (p2[k] - a[k]) * t + (2 * a[k] - 5 * p1[k] + 4 * p2[k] - d[k]) * t2 + (3 * p1[k] - a[k] - 3 * p2[k] + d[k]) * t3)));
    }
  }
  return out;
};
const area = (p) => p.reduce((s, a, i) => { const b = p[(i + 1) % p.length]; return s + a[0] * b[1] - b[0] * a[1]; }, 0);
const contours = [outer, ...holes].map((c, i) => smooth((area(c) > 0) === (i === 0) ? c : [...c].reverse()));
const facePath = contours.map((c) => "M" + c.map((p) => `${p[0].toFixed(1)} ${p[1].toFixed(1)}`).join("L") + "Z").join("");
/* Each facet covers half of a control span and takes one shade from its slope. */
const FACET = STEPS / 2;
const walls = contours.flatMap((c) => c.map((a, i) => {
  const b = c[(i + 1) % c.length];
  if (a[0] - b[0] <= 0.02) return null;
  const s = i - (i % FACET), f0 = c[s], f1 = c[(s + FACET) % c.length];
  const ang = Math.abs(Math.atan2(f0[1] - f1[1], f0[0] - f1[0]) + 0.04);
  const v = Math.round(75 + 44 * Math.min(1, ang / 0.5));
  return { d: `M${a[0]} ${a[1]}L${b[0]} ${b[1]}V${b[1] + DEPTH}L${a[0]} ${a[1] + DEPTH}Z`, fill: `rgb(${v},${v},${v})`, z: a[1] + b[1] };
}).filter(Boolean)).sort((p, q) => p.z - q.z);

const Lettering = () => (
  <g transform="translate(480 180) scale(.33333)" shapeRendering="crispEdges">
    {walls.map((w, i) => <path key={i} d={w.d} fill={w.fill} />)}
    <path d={facePath} fill="#e5e5e5" fillRule="evenodd" />
  </g>
);

const Scene = () => (
  <svg width="1919" height="708" viewBox="0 0 1919 708" className="block" fill="none">
    <g stroke="#262e38">
      <path d="M113 0L-72 708M560 0L375 708M1003 0L822 708M1452 0L1272 708M0 325L1919 655M210 0L1919 292M0 689L112 708" />
      <path d="M1898 0L1714 708" stroke="#3b444f" />
    </g>
    <Lettering />
    <g shapeRendering="crispEdges">
      <path d="M982.500 108L961.500 194" stroke="#7ce87c" />
      <path d="M933 159L1039 177.500" stroke="#ee8f98" />
      <path d="M968.500 124v62" stroke="#7f80ec" />
      <path d="M965.500 162.500h6v6h-6z" stroke="#fff" fill="#212830" />
    </g>
    {/* UCS tripod */}
    <g>
      <path d="M53 657L60 620" stroke="#12a012" strokeWidth="4" />
      <path d="M52 657L97 666" stroke="#e02a2a" strokeWidth="4.500" /><path d="M54 657L97 665.500" stroke="#ff7070" />
      <path d="M50.500 630v31" stroke="#0b3a9c" strokeWidth="5" /><circle cx="50.500" cy="631" r="2" fill="#3c86ff" />
      <path d="M58 604l5.500 6.500L69 604M63.500 610.500V616" stroke="#2ea04a" />
      <path d="M48 614.500h12L48 626.500h12" stroke="#2360c8" />
      <path d="M94 650l12 13M106 650L94 663" stroke="#c63a44" />
    </g>
    {/* view cube */}
    <g transform="translate(1740 20) scale(.33333)" fontFamily="Liberation Sans, Arial, sans-serif" fontWeight="700">
      <ellipse cx="297" cy="250" rx="166" ry="133" stroke="#444b54" strokeWidth="43" />
      <path d="M240 70L383 95L360 212L205 185Z" fill="#b9babb" /><path d="M205 185L360 212L353 292L213 265Z" fill="#a9aaab" />
      <path d="M383 95L378 190L353 292L360 212Z" fill="#8b8d90" />
      <path d="M240 171L333 180L330 208L238 198Z" fill="#a5adb3" />
      <path d="M205 185L360 212" stroke="#555" strokeWidth="3" strokeDasharray="24 10" />
      <path d="M383 95L360 212L353 292" stroke="#4c4f53" strokeWidth="3" strokeDasharray="8 6" />
      <text transform="matrix(1 .12 -.12 1 264 149)" fontSize="34" fill="#4b4f54" textLength="64" lengthAdjust="spacingAndGlyphs">TOP</text>
      <text transform="matrix(1 .13 0 1 230 243)" fontSize="25" fill="#4b4f54" textLength="104" lengthAdjust="spacingAndGlyphs">FRONT</text>
      <g fill="#b9bbbd" stroke="#b9bbbd" strokeWidth="2" fontSize="58"><text transform="matrix(1 .08 -.22 1 106 217)">W</text><text transform="matrix(1 .08 -.1 1 446 281)">E</text><text transform="matrix(1 .08 -.15 1 234 409)">S</text></g>
      <rect x="226" y="446" width="143" height="52" rx="10" fill="#979ba9" stroke="#b0b3bf" strokeWidth="2" />
      <text x="238" y="480" fontSize="32" fontWeight="400" fill="#565c6b" textLength="73" lengthAdjust="spacingAndGlyphs">WCS</text>
      <path d="M328 463h23l-11 13z" stroke="#c9ccd6" strokeWidth="2" />
      {/* navigation bar */}
      <rect x="438" y="573" width="96" height="639" rx="10" fill="#555b61" />
      <path d="M440 745h92M440 1070h92" stroke="#60666c" strokeWidth="2" />
      <g stroke="#3a4047" strokeWidth="4">
        <circle cx="515" cy="589" r="10" /><circle cx="515" cy="1192" r="10" />
        <path d="M486 632h32v32a32 32 0 1 1-32-32zM486 645a19 19 0 1 0 1 0zM465 688l10-12M508 688l-10-12" />
        <path d="M468 826c-2-14-12-24-17-32 6-4 12 2 18 8l-4-32c5-4 9 0 10 6l4 18v-30c4-6 10-3 10 3v27l6-26c6-3 9 1 8 6l-4 28 9-16c6-2 9 2 7 6l-10 34z" strokeWidth="3" />
        <path d="M453 846l42 42M497 846l-42 42M452 856v-12h12M486 844h12v12M452 878v12h12" strokeWidth="3" /><circle cx="498" cy="886" r="13" /><path d="M507 896l13 13" strokeWidth="6" />
        <path d="M479 1020v-48h-5l11-14 11 14h-5v48zM468 1010c-28-8-20-26 8-28M494 982c34 2 34 24 0 28" strokeWidth="3" /><path d="M474 996l-12 9 12 9z" fill="#3a4047" />
        <path d="M451 1082h18v20h-18zM475 1082h18v20h-18zM499 1082h18v20h-18zM451 1111h48v40h-48z" strokeWidth="3" /><path d="M466 1119l18 11-18 11z" fill="#3a4047" strokeWidth="1" />
      </g>
      <path d="M481 721h14l-7 7zM481 932h14l-7 7zM481 1046h14l-7 7z" fill="#343a41" />
    </g>
  </svg>
);

const Viewport = () => (
  <main className="relative h-[708px] overflow-hidden bg-[#212830]">
    <Scene />
    <div className="absolute left-[4px] top-[5px] tracking-[0.03px] text-[#e6e6e6]">[−][Custom View][Shaded (Fast)]</div>
  </main>
);

const CommandLine = () => (
  <div className="flex h-[68px] flex-col border-y-[4px] border-[#3b4453]">
    <div className="flex h-[60px] bg-[#222933] py-px">
      <div className="flex w-[25px] flex-col items-center bg-[#2c3441] pr-px">
        <Ic w={18} h={6} c="mt-[4px]"><path d="M0 1h18M0 4.500h18" stroke={W} strokeWidth="2" strokeDasharray="2 1" /></Ic>
        <Ic w={9} h={9} c="mt-[8px]"><path d="M.5 .5l8 8M8.500 .5l-8 8" stroke={W} strokeWidth="2" /></Ic>
        <Ic w={16} h={16} c="mt-[12px]"><path d="M1 15c-1-1-1-2 0-3l7-6c-1-3 2-6 5-5l-2 3 2 2 3-2c0 4-3 5-5 4l-7 7c-1 1-2 1-3 0z" fill={W} /></Ic>
      </div>
      <div className="flex flex-1 flex-col font-['DejaVu_Sans_Mono',monospace] text-[11.600px] text-black">
        <div className="h-[37px] whitespace-pre bg-[#c8c8c8] pl-[2px] pt-[6px] leading-[15px]">
          <div>Command:</div><div>Right-click to display the shortcut menu. Press ESC or ENTER to exit.</div>
        </div>
        <div className="mt-px flex h-[20px] items-center bg-white pl-[4px] italic text-[#6c6c6c]">
          <Ic w={16} h={12}><path d="M.5 .5h15v11H.5zM0 1.500h16" stroke="#444" /><path d="M2.500 4l2 2-2 2M6 8.500h4" stroke="#444" /></Ic>
          <Ic w={8} h={5} c="ml-[2px] mr-[6px]"><path d="M0 0h8L4 5z" fill="#555" /></Ic>Type a command
        </div>
      </div>
    </div>
  </div>
);

const LayoutTabs = () => (
  <div className="flex h-[30px] items-start text-[#e8e8e8]">
    <div className="ml-[8px] flex h-[24px] w-[69px] items-center bg-[#3b4453] pl-[17px] pt-px text-[11.500px] font-bold text-white [clip-path:polygon(14%_0,100%_0,87%_100%,0_100%)]">Model</div>
    <div className="flex h-[24px] items-center pt-px text-[11.700px]">
      <span className="ml-[6px] w-[52px]">Layout1</span><Slash /><span className="ml-[7px] w-[52px]">Layout2</span><Slash /><Plus c="ml-[10px]" /><Slash c="ml-[11px]" />
    </div>
  </div>
);

/* ---------- status bar ---------- */
const SCaret = ({ c = "" }) => <Ic w={8} h={5} c={c}><path d="M0 0h8L4 5z" fill={W} /></Ic>;
const Cell = ({ w, on, children }) => (
  <div className={`flex h-[24px] shrink-0 items-center justify-center ${w} ${on ? "border-t border-b-2 border-[#3b4453] bg-[#5f8fc4]" : "bg-[#3b4453]"}`}>{children}</div>
);
const StatusBar = () => (
  <footer className="flex h-[24px] items-center bg-[#222933] pl-[2px] text-[11.500px] text-[#ececec]">
    <div className="mr-[4px] h-[24px] flex-1 bg-[#3b4453]" />
    <Cell w="w-[47px]"><span className="-mt-px tracking-[0.2px]">MODEL</span></Cell>
    <div className="ml-[4px] flex">
      <Cell on w="w-[22px]"><Ic><path d="M4.500 0v16M8.500 0v16M12.500 0v16M0 4.500h16M0 8.500h16M0 12.500h16" stroke="#fff" /></Ic></Cell>
      <Cell w="w-[23px]"><Ic w={14} h={14}><path d="M0 1h14M0 5h14M0 9h14M0 13h14" stroke={W} strokeWidth="1.500" strokeDasharray="2 2" /></Ic></Cell>
      <Cell w="w-[19px]"><SCaret /></Cell>
    </div>
    <div className="ml-[3px] flex">
      <Cell on w="w-[22px]"><Ic><path d="M4 1v7M.5 4.500h7" stroke="#fff" strokeWidth="1.300" /><path d="M6 10h10v5H6z" fill="#fff" /></Ic></Cell>
      <Cell w="w-[26px]"><Ic><path d="M11 2.500A6.500 6.500 0 1 0 13.500 9H7l8-8" stroke={W} strokeWidth="1.200" /></Ic></Cell>
      <Cell w="w-[16px]"><SCaret /></Cell>
      <Cell w="w-[23px]"><Ic><path d="M1 2l14 12" stroke={R} /><path d="M8 0v16" stroke={G} /></Ic></Cell>
      <Cell w="w-[18px]"><SCaret /></Cell>
      <Cell on w="w-[22px]"><Ic><path d="M6 2.500h8.500v12h-12V6" stroke="#fff" strokeWidth="1.200" /><path d="M.5 .5h4v4h-4z" stroke="#fff" /></Ic></Cell>
      <Cell w="w-[18px]"><SCaret /></Cell>
    </div>
    <div className="ml-[3px] flex">
      <Cell w="w-[23px]"><Ic><path d="M2 6l4-4h8v9l-3 3H2zM2 6h9v8M11 6l3-4" stroke={W} strokeDasharray="3 1" /><path d="M0 4h3v3H0zM9 4h3v3H9zM0 13h3v3H0zM9 13h3v3H9z" fill={B} /></Ic></Cell>
      <Cell w="w-[18px]"><SCaret /></Cell>
      <Cell on w="w-[22px]"><Ic><path d="M8 1L2 5v7l6 3.500L14 12V5zM8 3v6M8 9l-6 4M8 9l6 4" stroke="#fff" strokeWidth="1.200" /><path d="M6 0h4v3H6zM0 12h4v3H0zM12 12h4v3h-4z" fill="#fff" /></Ic></Cell>
      <Cell w="w-[17px]"><SCaret /></Cell>
    </div>
    <div className="ml-[3px] flex">
      <Cell w="w-[23px]"><Ic w={14}><path d="M7 0l2 7 5 9-7-5-7 5 5-9z" fill={W} /></Ic></Cell>
      <Cell w="w-[21px]"><span className="-mr-[3px] tracking-[-0.3px]">1:1</span></Cell>
      <Cell w="w-[14px]"><SCaret /></Cell>
    </div>
    <div className="ml-[3px] flex">
      <Cell w="w-[23px]"><Ic><circle cx="8" cy="8" r="4" stroke={W} strokeWidth="3.500" /><circle cx="8" cy="8" r="6.700" stroke={W} strokeWidth="2.500" strokeDasharray="2.630 2.630" /></Ic></Cell>
      <Cell w="w-[17px]"><SCaret /></Cell>
    </div>
    <div className="ml-px flex"><Cell w="w-[24px]"><Ic><path d="M8 0v16M0 8h16" stroke={W} strokeWidth="2" /></Ic></Cell></div>
    <div className="ml-[3px] flex"><Cell w="w-[24px]"><Ic w={12}><path d="M.5 .5h11v15H.5z" stroke={W} /><path d="M0 0h12v4H0z" fill={W} /><path d="M2.500 6.500h2M2.500 9.500h2M2.500 12.500h2M6 6.500h4M6 9.500h4M6 12.500h4" stroke={W} /></Ic></Cell></div>
    <div className="ml-[3px] flex">
      <Cell w="w-[22px]"><Ic><path d="M0 0h9c5 1 6 4 6 8H4V4H0z" fill="#2d6db5" /><path d="M1 3h8M4 1v8" stroke="#9fd0ff" /><path d="M0 9h6v6H0z" fill={Y} /><path d="M5 10l4 5 6-8" stroke="#53c33c" strokeWidth="2.500" /></Ic></Cell>
      <Cell w="w-[27px]"><Ic><path d="M0 0h15v11l-4 3H0z" fill="#dcdcdc" /><path d="M1 9l4-6 4 6 5-7" stroke="#345" strokeWidth="1.200" /><path d="M12 8l4 8H8z" fill="#f0a878" /></Ic></Cell>
    </div>
    <div className="ml-[3px] flex">
      <Cell w="w-[23px]"><Ic h={12}><path d="M.7 .7h14.600v10.600H.7z" stroke={W} strokeWidth="1.400" /><path d="M9 5l3-2.500M9.500 2.500H12V5M7 7L4 9.500M6.500 9.500H4V7" stroke={W} /></Ic></Cell>
      <Cell w="w-[26px]"><Ic w={17}><path d="M0 2h17M0 8h17M0 14h17" stroke={W} strokeWidth="2" /></Ic></Cell>
    </div>
  </footer>
);

export default function App() {
  return (
    <div className="flex h-[1030px] w-[1919px] flex-col overflow-hidden bg-[#222933] font-['Open_Sans','Noto_Sans',sans-serif] text-[11.500px] leading-[15px]">
      <TitleBar />
      <MenuBar />
      <TabBar />
      <Ribbon />
      <DocTabs />
      <div className="h-[5px] border-b border-black bg-[#3b4453]" />
      <Viewport />
      <CommandLine />
      <LayoutTabs />
      <StatusBar />
    </div>
  );
}
